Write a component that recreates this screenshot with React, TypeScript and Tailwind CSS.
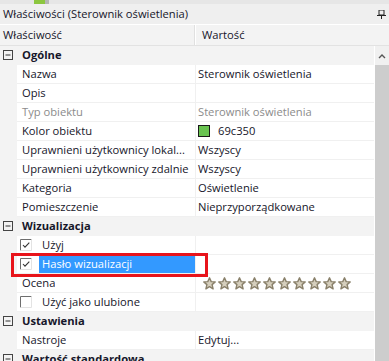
import React from "react";

type Row =
  | { kind: "group"; label: string }
  | { kind: "item"; label: string; value?: React.ReactNode; muted?: boolean }
  | { kind: "check"; label: string; checked: boolean; selected?: boolean };

const Star = () => (
  <svg width="13" height="13" viewBox="0 0 13 13">
    <polygon
      points="6.5,0.8 8.2,4.6 12.2,4.9 9.1,7.6 10.1,11.8 6.5,9.6 2.9,11.8 3.9,7.6 0.8,4.9 4.8,4.6"
      fill="#d6cfbd"
      stroke="#8a816b"
      strokeWidth="1.4"
      strokeLinejoin="round"
    />
  </svg>
);

const Checkbox = ({ checked }: { checked: boolean }) => (
  <svg width="12" height="12" viewBox="0 0 12 12" className="shrink-0">
    <rect x="0" y="0" width="12" height="12" fill="#ffffff" />
    <path d="M0.5 11.5 V0.5 H11.5" fill="none" stroke="#6e6e6e" />
    <path d="M11.5 0.5 V11.5 H0.5" fill="none" stroke="#e3e3e3" />
    {checked && (
      <path d="M3 6 L5 8.2 L9.3 3.6" fill="none" stroke="#333" strokeWidth="1.1" />
    )}
  </svg>
);

const Minus = () => (
  <svg width="10" height="10" viewBox="0 0 10 10" className="shrink-0">
    <rect x="0.5" y="0.5" width="9" height="9" fill="none" stroke="#444" />
    <path d="M2.5 5 H7.5" stroke="#333" />
  </svg>
);

const rows: Row[] = [
  { kind: "group", label: "Ogólne" },
  { kind: "item", label: "Nazwa", value: "Sterownik oświetlenia" },
  { kind: "item", label: "Opis", value: "" },
  { kind: "item", label: "Typ obiektu", value: "Sterownik oświetlenia", muted: true },
  {
    kind: "item",
    label: "Kolor obiektu",
    value: (
      <span className="flex items-center gap-[8px]">
        <span className="w-[12px] h-[12px] bg-[#69c350] border border-[#1a1a1a] box-border" />
        69c350
      </span>
    ),
  },
  { kind: "item", label: "Uprawnieni użytkownicy lokal...", value: "Wszyscy" },
  { kind: "item", label: "Uprawnieni użytkownicy zdalnie", value: "Wszyscy" },
  { kind: "item", label: "Kategoria", value: "Oświetlenie" },
  { kind: "item", label: "Pomieszczenie", value: "Nieprzyporządkowane" },
  { kind: "group", label: "Wizualizacja" },
  { kind: "check", label: "Użyj", checked: true },
  { kind: "check", label: "Hasło wizualizacji", checked: true, selected: true },
  {
    kind: "item",
    label: "Ocena",
    value: (
      <span className="flex items-center gap-[2px] pl-[5px]">
        {Array.from({ length: 10 }).map((_, i) => (
          <Star key={i} />
        ))}
      </span>
    ),
  },
  { kind: "check", label: "Użyć jako ulubione", checked: false },
  { kind: "group", label: "Ustawienia" },
  { kind: "item", label: "Nastroje", value: "Edytuj..." },
  { kind: "group", label: "Wartość standardowa" },
];

export default function App() {
  return (
    <div
      className="w-[389px] h-[361px] overflow-hidden bg-[#f3f3f3] flex flex-col text-[11.2px] text-[#16162a] relative"
      style={{ fontFamily: '"Open Sans", "Noto Sans", sans-serif' }}
    >
      {/* tab strip */}
      <div className="h-[4px] bg-[#e6e6e6] flex shrink-0">
        <div className="w-[34px]" />
        <div className="w-[11px] bg-[#8cc63f]" />
        <div className="w-[4px] bg-[#b5b5b5]" />
      </div>

      {/* title */}
      <div className="h-[20px] bg-[#efefef] flex items-center justify-between pl-[3px] pr-[3px] shrink-0">
        <span>Właściwości (Sterownik oświetlenia)</span>
        <svg width="9" height="9" viewBox="0 0 9 9">
          <rect x="2" y="0" width="5" height="5" fill="none" stroke="#222" />
          <path d="M0 5.5 H9" stroke="#222" />
          <path d="M4.5 5.5 V9" stroke="#222" />
        </svg>
      </div>
      <div className="h-[1px] bg-white shrink-0" />

      {/* header */}
      <div className="h-[20px] bg-[#f3f3f3] flex shrink-0 border-b border-[#e2e2e2] box-content">
        <div className="w-[195px] flex items-center pl-[3px] border-r border-[#e0e0e0]">Właściwość</div>
        <div className="flex-1 flex items-center pl-[6px] border-l border-white">Wartość</div>
      </div>

      {/* body */}
      <div className="flex flex-1 min-h-0">
        <div className="flex-1 flex flex-col">
          {rows.map((r, i) => {
            if (r.kind === "group") {
              return (
                <div key={i} className="h-[19px] shrink-0 flex items-center bg-[#f3f3f3] pl-[3px] gap-[9px] border-b border-[#f3f3f3]">
                  <Minus />
                  <span className="font-bold">{r.label}</span>
                </div>
              );
            }
            return (
              <div key={i} className="h-[19px] shrink-0 flex">
                <div className="w-[17px] bg-[#f3f3f3] shrink-0" />
                <div className="w-[178px] shrink-0 bg-white border-b border-[#f0f0f0] flex items-center">
                  {r.kind === "item" ? (
                    <span className={`pl-[5px] truncate ${r.muted ? "text-[#8b8b8b]" : ""}`}>{r.label}</span>
                  ) : (
                    <div className="flex items-center h-full pl-[3px] w-full">
                      <Checkbox checked={r.checked} />
                      <span
                        className={`ml-[7px] pl-[3px] h-[17px] flex items-center flex-1 ${
                          r.selected ? "bg-[#3399ff] text-white" : ""
                        }`}
                      >
                        {r.label}
                      </span>
                    </div>
                  )}
                </div>
                <div className="flex-1 bg-white border-b border-l border-[#f0f0f0] flex items-center pl-[2px]">
                  {r.kind === "item" && (
                    <span className={r.muted ? "text-[#8b8b8b]" : ""}>{r.value}</span>
                  )}
                </div>
              </div>
            );
          })}
        </div>

        {/* scrollbar */}
        <div className="w-[15px] flex flex-col border-l border-white shrink-0">
          <div className="h-[19px] bg-[#f0f0f0] flex items-center justify-center">
            <svg width="8" height="6" viewBox="0 0 8 6">
              <path d="M1 5 L4 2 L7 5" fill="none" stroke="#555" strokeWidth="1.4" />
            </svg>
          </div>
          <div className="flex-1 bg-[#cdcdcd]" />
        </div>
      </div>

      {/* annotation */}
      <div className="absolute left-[11px] top-[253px] w-[197px] h-[24px] border-[3px] border-[#e8141b] pointer-events-none" />
    </div>
  );
}
